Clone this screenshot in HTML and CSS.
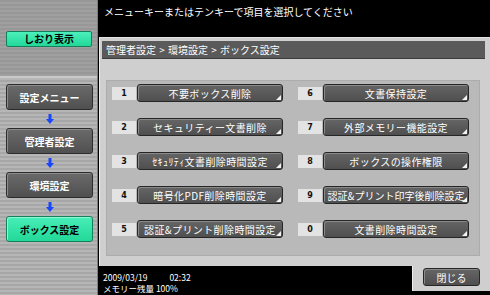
FILE: index.html
```html
<!DOCTYPE html>
<html lang="ja">
<head>
  <meta charset="UTF-8">
  <title>ボックス設定</title>
  <link rel="stylesheet" href="styles.css">
</head>
<body>
  <div class="screen">
    <div class="sidebar">
      <div class="side-top">
        <div class="bookmark">しおり表示</div>
      </div>
      <div class="side-nav">
        <div class="nav-btn">設定メニュー</div>
        <div class="arrow"><svg width="8" height="10" viewBox="0 0 8 10"><path d="M2.5 0h3v5h2.5l-4 5l-4-5h2.5z" fill="#1846ff"/></svg></div>
        <div class="nav-btn">管理者設定</div>
        <div class="arrow"><svg width="8" height="10" viewBox="0 0 8 10"><path d="M2.5 0h3v5h2.5l-4 5l-4-5h2.5z" fill="#1846ff"/></svg></div>
        <div class="nav-btn">環境設定</div>
        <div class="arrow"><svg width="8" height="10" viewBox="0 0 8 10"><path d="M2.5 0h3v5h2.5l-4 5l-4-5h2.5z" fill="#1846ff"/></svg></div>
        <div class="nav-btn current">ボックス設定</div>
      </div>
    </div>

    <div class="main">
      <div class="message">メニューキーまたはテンキーで項目を選択してください</div>
      <div class="panel">
        <div class="crumbs">管理者設定 &gt; 環境設定 &gt; ボックス設定</div>
        <div class="menu">
          <div class="item"><span class="num">1</span><span class="btn">不要ボックス削除</span></div>
          <div class="item"><span class="num">6</span><span class="btn">文書保持設定</span></div>
          <div class="item"><span class="num">2</span><span class="btn">セキュリティー文書削除</span></div>
          <div class="item"><span class="num">7</span><span class="btn">外部メモリー機能設定</span></div>
          <div class="item"><span class="num">3</span><span class="btn">ｾｷｭﾘﾃｨ文書削除時間設定</span></div>
          <div class="item"><span class="num">8</span><span class="btn">ボックスの操作権限</span></div>
          <div class="item"><span class="num">4</span><span class="btn">暗号化PDF削除時間設定</span></div>
          <div class="item"><span class="num">9</span><span class="btn tight">認証&amp;プリント印字後削除設定</span></div>
          <div class="item"><span class="num">5</span><span class="btn">認証&amp;プリント削除時間設定</span></div>
          <div class="item"><span class="num">0</span><span class="btn">文書削除時間設定</span></div>
        </div>
      </div>
      <div class="footer">
        <div class="status">
          <div class="line"><span>2009/03/19</span><span class="time">02:32</span></div>
          <div class="line">メモリー残量 100%</div>
        </div>
        <div class="close-tab">
          <div class="close-btn">閉じる</div>
        </div>
      </div>
    </div>
  </div>
</body>
</html>
```

FILE: styles.css
```css
* {
  box-sizing: border-box;
}

body {
  margin: 0;
  width: 490px;
  height: 295px;
  overflow: hidden;
  background: #000;
  font-family: "Noto Sans CJK JP", "Noto Sans", sans-serif;
  font-size: 10px;
}

.screen {
  display: flex;
  height: 295px;
}

/* left column */
.sidebar {
  width: 98px;
  display: flex;
  flex-direction: column;
  border-right: 1px solid #7c7c7c;
}

.side-top {
  height: 78px;
  flex-shrink: 0;
  padding: 31px 5px 0 6px;
  background: repeating-linear-gradient(#979797 0 2px, #a0a0a0 2px 4px);
  border-bottom: 2px solid #cacaca;
}

.bookmark {
  height: 16px;
  line-height: 14px;
  text-align: center;
  font-weight: bold;
  color: #000;
  background: linear-gradient(#4cf0bc, #22d898);
  border: 1px solid #14805a;
  border-radius: 2px;
}

.side-nav {
  flex: 1;
  display: flex;
  flex-direction: column;
  padding: 6px 4px 0 6px;
  background: repeating-linear-gradient(#b6b6b6 0 2px, #a7a7a7 2px 4px);
}

.nav-btn {
  height: 26px;
  flex-shrink: 0;
  display: flex;
  align-items: center;
  justify-content: center;
  color: #fff;
  font-weight: bold;
  background: linear-gradient(#6a6a6a, #505050);
  border: 1px solid #2c2c2c;
  border-radius: 3px;
  box-shadow: inset 1px 1px 0 #8c8c8c;
}

.nav-btn.current {
  color: #000;
  background: linear-gradient(#48eeb8, #22d898);
  border-color: #14805a;
  box-shadow: inset 1px 1px 0 #8ff6d4;
}

.arrow {
  height: 18px;
  flex-shrink: 0;
  display: flex;
  align-items: center;
  justify-content: center;
}

/* right side */
.main {
  flex: 1;
  display: flex;
  flex-direction: column;
  min-height: 0;
}

.message {
  height: 37px;
  flex-shrink: 0;
  padding: 5px 6px;
  color: #fff;
  line-height: 13px;
}

.panel {
  height: 229px;
  flex-shrink: 0;
  margin-left: 1px;
  padding: 3px 5px 0 2px;
  background: #cfcfcf;
  border-left: 1px solid #ededed;
  border-top: 1px solid #e2e2e2;
}

.crumbs {
  height: 18px;
  line-height: 17px;
  padding-left: 4px;
  color: #fff;
  word-spacing: 1px;
  background: #5a5a5a;
  border-bottom: 1px solid #3c3c3c;
}

.menu {
  height: 176px;
  margin: 21px 5px 0 4px;
  padding: 3px 0 0 5px;
  background: #b9b9b9;
  border: 1px solid #acacac;
  display: grid;
  grid-template-columns: 171px 171px;
  grid-auto-rows: 18px;
  column-gap: 15px;
  row-gap: 16px;
}

.item {
  display: flex;
  align-items: center;
  gap: 1px;
}

.num {
  width: 24px;
  height: 13px;
  line-height: 13px;
  text-align: center;
  font-family: "DejaVu Sans", sans-serif;
  font-size: 8px;
  font-weight: bold;
  color: #111;
  background: #e3e3e3;
}

.btn {
  position: relative;
  width: 146px;
  height: 18px;
  display: flex;
  align-items: center;
  justify-content: center;
  color: #fff;
  white-space: nowrap;
  background: linear-gradient(#656565, #4f4f4f);
  border: 1px solid #262626;
  border-radius: 3px;
  box-shadow: inset 1px 1px 0 #8a8a8a;
  letter-spacing: 0.4px;
}

.btn.tight {
  letter-spacing: 0;
}

.btn::after {
  content: "";
  position: absolute;
  right: 1px;
  bottom: 1px;
  border-left: 5px solid transparent;
  border-bottom: 5px solid #f2f2f2;
}

.footer {
  flex: 1;
  min-height: 0;
  display: flex;
  overflow: hidden;
}

.status {
  flex: 1;
  padding: 6px 0 0 5px;
  color: #fff;
  font-size: 8.5px;
}

.line {
  height: 11px;
  line-height: 11px;
  white-space: nowrap;
}

.time {
  margin-left: 22px;
}

.close-tab {
  width: 78px;
  height: 25px;
  padding: 2px 10px 0 10px;
  background: #cfcfcf;
  border-left: 1px solid #ededed;
}

.close-btn {
  height: 18px;
  display: flex;
  align-items: center;
  justify-content: center;
  color: #fff;
  background: linear-gradient(#656565, #4f4f4f);
  border: 1px solid #262626;
  border-radius: 3px;
  box-shadow: inset 1px 1px 0 #8a8a8a;
}
```
